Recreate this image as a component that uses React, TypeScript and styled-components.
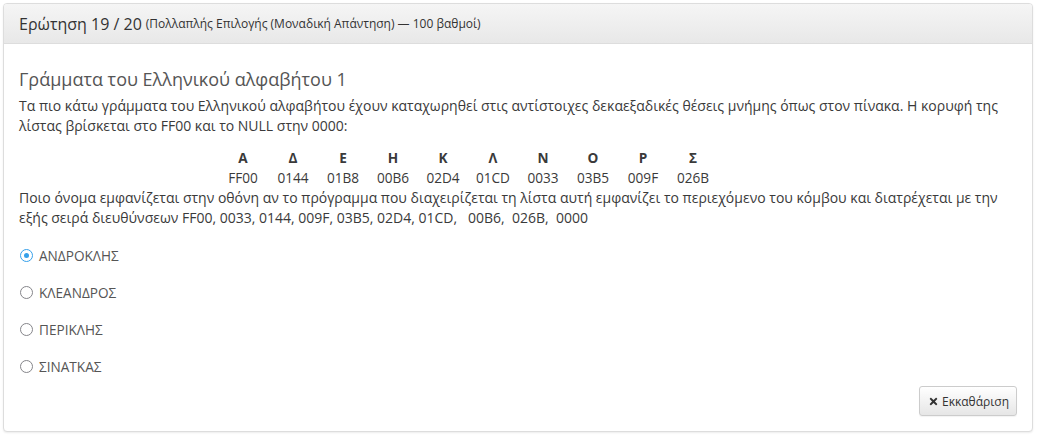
import React, { useState } from "react";
import styled, { createGlobalStyle } from "styled-components";
import { FaTimes } from "react-icons/fa";

const GlobalStyle = createGlobalStyle`
  body {
    margin: 0;
    background: #fff;
    font-family: "Open Sans", "Noto Sans", sans-serif;
    color: #333;
  }
`;

const Page = styled.div`
  padding: 3px 5px 6px 3px;
`;

const Panel = styled.div`
  border: 1px solid #ddd;
  border-radius: 4px;
  background: #fff;
  box-shadow: 0 1px 2px rgba(0, 0, 0, 0.08);
`;

const PanelHeading = styled.div`
  padding: 0 15px;
  height: 39px;
  display: flex;
  align-items: center;
  border-bottom: 1px solid #ddd;
  border-radius: 3px 3px 0 0;
  background: linear-gradient(to bottom, #f5f5f5 0%, #e8e8e8 100%);
  color: #333;
`;

const HeadingTitle = styled.span`
  font-size: 16px;
`;

const HeadingMeta = styled.small`
  font-size: 12px;
  margin-left: 4px;
`;

const PanelBody = styled.div`
  padding: 15px;
  display: flex;
  flex-direction: column;
`;

const QuestionTitle = styled.h4`
  margin: 10px 0 7px;
  font-size: 18px;
  font-weight: 400;
  line-height: 20px;
  color: #555;
`;

const Text = styled.p<{ $gap?: number }>`
  margin: 0 0 ${(p) => p.$gap ?? 0}px;
  font-size: 14px;
  line-height: 20px;
  color: #3a3a3a;
`;

const AddressTable = styled.div`
  display: grid;
  grid-template-columns: repeat(10, 50px);
  margin-left: 199px;
  font-size: 13.6px;
  line-height: 20px;
  text-align: center;
`;

const Letter = styled.div`
  font-weight: 700;
  color: #3a3a3a;
`;

const Address = styled.div`
  color: #3a3a3a;
`;

const Options = styled.div`
  display: flex;
  flex-direction: column;
  gap: 17px;
  margin-top: 7px;
`;

const Option = styled.label`
  display: flex;
  align-items: center;
  gap: 6px;
  height: 20px;
  font-size: 13.6px;
  color: #555;
  cursor: pointer;
`;

const RadioMark = styled.span<{ $checked: boolean }>`
  box-sizing: border-box;
  width: 13px;
  height: 13px;
  margin-left: 1px;
  border-radius: 50%;
  border: 1.8px solid ${(p) => (p.$checked ? "#35a0ea" : "#85858a")};
  display: flex;
  align-items: center;
  justify-content: center;
  &::after {
    content: "";
    width: 5px;
    height: 5px;
    border-radius: 50%;
    background: ${(p) => (p.$checked ? "#35a0ea" : "transparent")};
  }
`;

const Footer = styled.div`
  display: flex;
  justify-content: flex-end;
  margin-top: 10px;
`;

const ClearButton = styled.button`
  height: 30px;
  padding: 0 7px 0 8px;
  display: flex;
  align-items: center;
  gap: 3px;
  font-family: inherit;
  font-size: 12px;
  color: #333;
  border: 1px solid #ccc;
  border-radius: 3px;
  background: linear-gradient(to bottom, #fff 0%, #e6e6e6 100%);
  box-shadow: 0 1px 1px rgba(0, 0, 0, 0.05);
  cursor: pointer;
`;

const letters = [
  ["Α", "FF00"],
  ["Δ", "0144"],
  ["Ε", "01B8"],
  ["Η", "00B6"],
  ["Κ", "02D4"],
  ["Λ", "01CD"],
  ["Ν", "0033"],
  ["Ο", "03B5"],
  ["Ρ", "009F"],
  ["Σ", "026B"],
];

const answers = ["ΑΝΔΡΟΚΛΗΣ", "ΚΛΕΑΝΔΡΟΣ", "ΠΕΡΙΚΛΗΣ", "ΣΙΝΑΤΚΑΣ"];

export default function App() {
  const [selected, setSelected] = useState<number | null>(0);

  return (
    <Page>
      <GlobalStyle />
      <Panel>
        <PanelHeading>
          <HeadingTitle>Ερώτηση 19 / 20</HeadingTitle>
          <HeadingMeta>
            (Πολλαπλής Επιλογής (Μοναδική Απάντηση) — 100 βαθμοί)
          </HeadingMeta>
        </PanelHeading>
        <PanelBody>
          <QuestionTitle>Γράμματα του Ελληνικού αλφαβήτου 1</QuestionTitle>
          <Text $gap={12}>
            Τα πιο κάτω γράμματα του Ελληνικού αλφαβήτου έχουν καταχωρηθεί
            στις αντίστοιχες δεκαεξαδικές θέσεις μνήμης όπως στον πίνακα. Η
            κορυφή της λίστας βρίσκεται στο FF00 και το NULL στην 0000:
          </Text>
          <AddressTable>
            {letters.map(([l]) => (
              <Letter key={l}>{l}</Letter>
            ))}
            {letters.map(([l, a]) => (
              <Address key={l + a}>{a}</Address>
            ))}
          </AddressTable>
          <Text $gap={10}>
            Ποιο όνομα εμφανίζεται στην οθόνη αν το πρόγραμμα που διαχειρίζεται
            τη λίστα αυτή εμφανίζει το περιεχόμενο του κόμβου και διατρέχεται
            με την εξής σειρά διευθύνσεων FF00, 0033, 0144, 009F, 03B5, 02D4,
            01CD,&nbsp;&nbsp; 00B6,&nbsp; 026B,&nbsp; 0000
          </Text>
          <Options>
            {answers.map((a, i) => (
              <Option key={a} onClick={() => setSelected(i)}>
                <RadioMark $checked={selected === i} />
                {a}
              </Option>
            ))}
          </Options>
          <Footer>
            <ClearButton onClick={() => setSelected(null)}>
              <FaTimes size={11} />
              Εκκαθάριση
            </ClearButton>
          </Footer>
        </PanelBody>
      </Panel>
    </Page>
  );
}
